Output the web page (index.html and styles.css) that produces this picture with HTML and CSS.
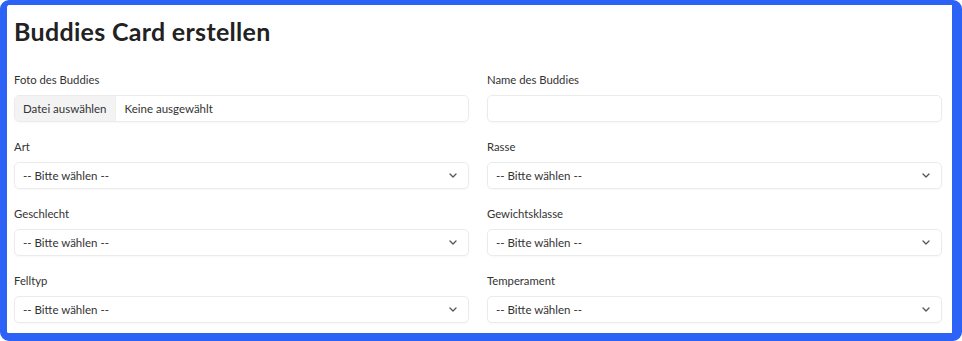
FILE: index.html
```html
<!DOCTYPE html>
<html lang="de">
<head>
    <meta charset="UTF-8">
    <meta name="viewport" content="width=device-width, initial-scale=1.0">
    <title>Buddies Card erstellen</title>
    <link rel="stylesheet" href="styles.css">
</head>
<body>

<div class="frame">
    <div class="card">
        <h1 class="title">Buddies Card erstellen</h1>

        <form class="form-grid">
            <div class="field">
                <label class="field-label">Foto des Buddies</label>
                <div class="file-input">
                    <span class="file-button">Datei auswählen</span>
                    <span class="file-name">Keine ausgewählt</span>
                </div>
            </div>
            <div class="field">
                <label class="field-label">Name des Buddies</label>
                <input class="text-input" type="text">
            </div>

            <div class="field">
                <label class="field-label">Art</label>
                <div class="select-wrap">
                    <select class="select-input"><option>-- Bitte wählen --</option></select>
                    <svg class="chevron" viewBox="0 0 8 5" width="8" height="5"><path d="M1 1l3 3 3-3" fill="none" stroke="#555" stroke-width="1.3" stroke-linecap="round" stroke-linejoin="round"/></svg>
                </div>
            </div>
            <div class="field">
                <label class="field-label">Rasse</label>
                <div class="select-wrap">
                    <select class="select-input"><option>-- Bitte wählen --</option></select>
                    <svg class="chevron" viewBox="0 0 8 5" width="8" height="5"><path d="M1 1l3 3 3-3" fill="none" stroke="#555" stroke-width="1.3" stroke-linecap="round" stroke-linejoin="round"/></svg>
                </div>
            </div>

            <div class="field">
                <label class="field-label">Geschlecht</label>
                <div class="select-wrap">
                    <select class="select-input"><option>-- Bitte wählen --</option></select>
                    <svg class="chevron" viewBox="0 0 8 5" width="8" height="5"><path d="M1 1l3 3 3-3" fill="none" stroke="#555" stroke-width="1.3" stroke-linecap="round" stroke-linejoin="round"/></svg>
                </div>
            </div>
            <div class="field">
                <label class="field-label">Gewichtsklasse</label>
                <div class="select-wrap">
                    <select class="select-input"><option>-- Bitte wählen --</option></select>
                    <svg class="chevron" viewBox="0 0 8 5" width="8" height="5"><path d="M1 1l3 3 3-3" fill="none" stroke="#555" stroke-width="1.3" stroke-linecap="round" stroke-linejoin="round"/></svg>
                </div>
            </div>

            <div class="field">
                <label class="field-label">Felltyp</label>
                <div class="select-wrap">
                    <select class="select-input"><option>-- Bitte wählen --</option></select>
                    <svg class="chevron" viewBox="0 0 8 5" width="8" height="5"><path d="M1 1l3 3 3-3" fill="none" stroke="#555" stroke-width="1.3" stroke-linecap="round" stroke-linejoin="round"/></svg>
                </div>
            </div>
            <div class="field">
                <label class="field-label">Temperament</label>
                <div class="select-wrap">
                    <select class="select-input"><option>-- Bitte wählen --</option></select>
                    <svg class="chevron" viewBox="0 0 8 5" width="8" height="5"><path d="M1 1l3 3 3-3" fill="none" stroke="#555" stroke-width="1.3" stroke-linecap="round" stroke-linejoin="round"/></svg>
                </div>
            </div>
        </form>
    </div>
</div>

</body>
</html>
```

FILE: styles.css
```css
* {
    box-sizing: border-box;
}

body {
    margin: 0;
    background-color: #fff;
    font-family: Lato, 'Noto Sans', sans-serif;
    color: #333;
}

.frame {
    width: 962px;
    height: 341px;
    border-style: solid;
    border-color: #2c62f5;
    border-width: 5px 10px 8px 7px;
    border-radius: 9px;
    overflow: hidden;
}

.card {
    background-color: #fff;
    height: 100%;
    border-radius: 3px;
    padding: 11px 10px 0 7px;
}

.title {
    margin: 0 0 26px;
    font-size: 25px;
    line-height: 30px;
    font-weight: 700;
    letter-spacing: 0.3px;
    color: #222;
}

.form-grid {
    display: grid;
    grid-template-columns: 1fr 1fr;
    column-gap: 18px;
    row-gap: 17px;
}

.field {
    display: flex;
    flex-direction: column;
}

.field-label {
    font-size: 11.3px;
    line-height: 16px;
    margin-bottom: 7px;
    color: #333;
}

.text-input,
.select-input,
.file-input {
    height: 27px;
    width: 100%;
    border: 1px solid #ebebeb;
    border-radius: 5px;
    background-color: #fff;
    box-shadow: 0 1px 2px rgba(0, 0, 0, 0.03);
    font-family: inherit;
    font-size: 11.5px;
    color: #333;
}

.file-input {
    display: flex;
    align-items: center;
    overflow: hidden;
}

.file-button {
    height: 100%;
    display: flex;
    align-items: center;
    padding: 0 8px;
    background-color: #f3f3f3;
    border-right: 1px solid #eee;
}

.file-name {
    padding-left: 9px;
}

.select-wrap {
    position: relative;
}

.select-input {
    appearance: none;
    -webkit-appearance: none;
    padding: 0 8px;
    outline: none;
}

.chevron {
    position: absolute;
    right: 12px;
    top: 11px;
    pointer-events: none;
}
```
